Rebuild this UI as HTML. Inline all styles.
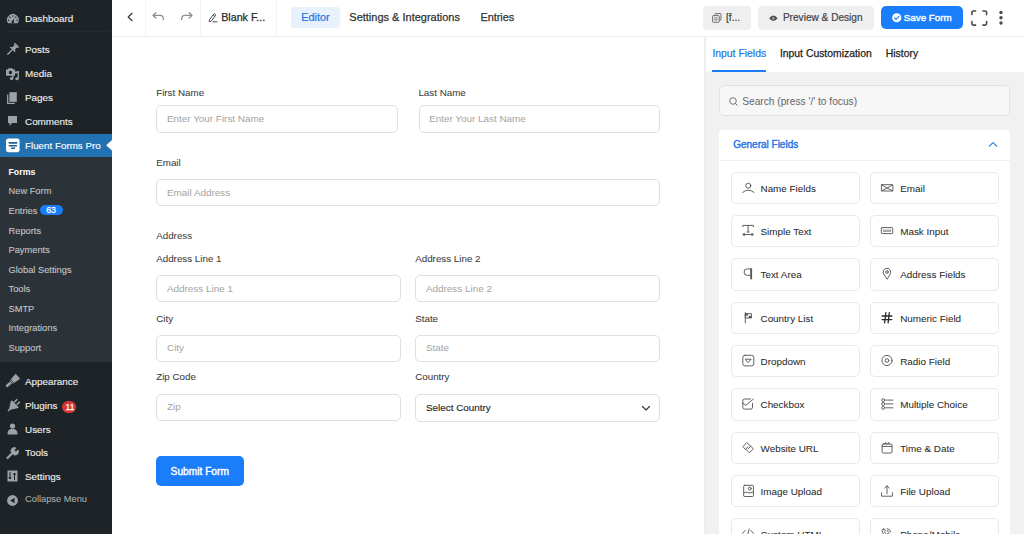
<!DOCTYPE html>
<html><head><meta charset="utf-8"><title>Fluent Forms Editor</title>
<style>
html,body{margin:0;padding:0;width:1024px;height:534px;overflow:hidden;background:#fff;font-family:"Liberation Sans", sans-serif;}
.t{position:absolute;white-space:nowrap;line-height:1;}
.r{position:absolute;}
svg.r{overflow:visible}
</style></head><body>
<div class="r" style="left:0.00px;top:0.00px;width:111.50px;height:534.00px;background:#1d2327"></div>
<div class="r" style="left:0.00px;top:133.80px;width:111.50px;height:23.40px;background:#2271b1"></div>
<div class="r" style="left:0.00px;top:157.20px;width:111.50px;height:205.20px;background:#2c3338"></div>
<svg class="r" style="left:105.9px;top:140.4px" width="6" height="10.4" viewBox="0 0 6 10.4"><path d="M6 0 L0.1 5.2 L6 10.4 Z" fill="#fff"/></svg>
<div class="t" style="left:25.00px;top:14.02px;font-size:9.9px;color:#f0f0f1;font-weight:400;-webkit-text-stroke:0.12px #f0f0f1;">Dashboard</div>
<div class="t" style="left:25.00px;top:45.42px;font-size:9.9px;color:#f0f0f1;font-weight:400;-webkit-text-stroke:0.12px #f0f0f1;">Posts</div>
<div class="t" style="left:25.00px;top:69.42px;font-size:9.9px;color:#f0f0f1;font-weight:400;-webkit-text-stroke:0.12px #f0f0f1;">Media</div>
<div class="t" style="left:25.00px;top:93.22px;font-size:9.9px;color:#f0f0f1;font-weight:400;-webkit-text-stroke:0.12px #f0f0f1;">Pages</div>
<div class="t" style="left:25.00px;top:117.22px;font-size:9.9px;color:#f0f0f1;font-weight:400;-webkit-text-stroke:0.12px #f0f0f1;">Comments</div>
<div class="t" style="left:25.00px;top:140.80px;font-size:9.8px;color:#fff;font-weight:400;-webkit-text-stroke:0.12px #fff;">Fluent Forms Pro</div>
<div class="t" style="left:8.50px;top:167.95px;font-size:8.8px;color:#fff;font-weight:700;">Forms</div>
<div class="t" style="left:8.50px;top:187.43px;font-size:9.3px;color:#c3c4c7;font-weight:400;-webkit-text-stroke:0.1px #c3c4c7;">New Form</div>
<div class="t" style="left:8.50px;top:206.93px;font-size:9.3px;color:#c3c4c7;font-weight:400;-webkit-text-stroke:0.1px #c3c4c7;">Entries</div>
<div class="t" style="left:8.50px;top:226.73px;font-size:9.3px;color:#c3c4c7;font-weight:400;-webkit-text-stroke:0.1px #c3c4c7;">Reports</div>
<div class="t" style="left:8.50px;top:246.23px;font-size:9.3px;color:#c3c4c7;font-weight:400;-webkit-text-stroke:0.1px #c3c4c7;">Payments</div>
<div class="t" style="left:8.50px;top:265.53px;font-size:9.3px;color:#c3c4c7;font-weight:400;-webkit-text-stroke:0.1px #c3c4c7;">Global Settings</div>
<div class="t" style="left:8.50px;top:285.13px;font-size:9.3px;color:#c3c4c7;font-weight:400;-webkit-text-stroke:0.1px #c3c4c7;">Tools</div>
<div class="t" style="left:8.50px;top:304.63px;font-size:9.3px;color:#c3c4c7;font-weight:400;-webkit-text-stroke:0.1px #c3c4c7;">SMTP</div>
<div class="t" style="left:8.50px;top:324.23px;font-size:9.3px;color:#c3c4c7;font-weight:400;-webkit-text-stroke:0.1px #c3c4c7;">Integrations</div>
<div class="t" style="left:8.50px;top:343.83px;font-size:9.3px;color:#c3c4c7;font-weight:400;-webkit-text-stroke:0.1px #c3c4c7;">Support</div>
<div class="r" style="left:39.90px;top:205.10px;width:22.90px;height:10.40px;background:#1a7efb;border-radius:6px"></div>
<div class="t" style="left:46.20px;top:206.35px;font-size:8.8px;color:#fff;font-weight:400;-webkit-text-stroke:0.25px #fff;">63</div>
<div class="t" style="left:25.00px;top:376.72px;font-size:9.9px;color:#f0f0f1;font-weight:400;-webkit-text-stroke:0.12px #f0f0f1;">Appearance</div>
<div class="t" style="left:25.00px;top:400.62px;font-size:9.9px;color:#f0f0f1;font-weight:400;-webkit-text-stroke:0.12px #f0f0f1;">Plugins</div>
<div class="t" style="left:25.00px;top:424.82px;font-size:9.9px;color:#f0f0f1;font-weight:400;-webkit-text-stroke:0.12px #f0f0f1;">Users</div>
<div class="t" style="left:25.00px;top:448.42px;font-size:9.9px;color:#f0f0f1;font-weight:400;-webkit-text-stroke:0.12px #f0f0f1;">Tools</div>
<div class="t" style="left:25.00px;top:472.02px;font-size:9.9px;color:#f0f0f1;font-weight:400;-webkit-text-stroke:0.12px #f0f0f1;">Settings</div>
<div class="r" style="left:62.00px;top:400.80px;width:14.20px;height:11.80px;background:#d63638;border-radius:7px"></div>
<div class="t" style="left:65.60px;top:402.79px;font-size:8.4px;color:#fff;font-weight:400;-webkit-text-stroke:0.25px #fff;">11</div>
<div class="t" style="left:25.00px;top:495.13px;font-size:9.3px;color:#a7aaad;font-weight:400;-webkit-text-stroke:0.1px #a7aaad;">Collapse Menu</div>
<div class="r" style="left:4.00px;top:30.50px;width:107.00px;height:1.00px;background:#23292e"></div>
<svg class="r" style="left:6.7px;top:13.8px" width="12" height="10" viewBox="0 0 12 10"><path d="M1.05 9.2 A5.85 5.85 0 1 1 10.65 9.2 Z" fill="#9ca2a7"/><circle cx="5.85" cy="1.9" r="0.75" fill="#1d2327"/><circle cx="2.9" cy="3.2" r="0.75" fill="#1d2327"/><circle cx="8.8" cy="3.2" r="0.75" fill="#1d2327"/><circle cx="1.7" cy="6.2" r="0.75" fill="#1d2327"/><circle cx="10" cy="6.2" r="0.75" fill="#1d2327"/><path d="M4.9 8.2 L7.2 3.9 L6.9 8.2 Z" fill="#1d2327"/><circle cx="5.8" cy="7.9" r="1.2" fill="#1d2327"/></svg>
<svg class="r" style="left:6.3px;top:43.8px" width="12" height="12" viewBox="0 0 12 12"><g transform="rotate(45 6 6)"><rect x="3" y="-1.2" width="6" height="1.6" rx="0.4" fill="#9ca2a7"/><rect x="4.2" y="0.2" width="3.6" height="3.8" fill="#9ca2a7"/><path d="M1.8 5.6 L4 3.6 H8 L10.2 5.6 Z" fill="#9ca2a7"/><rect x="5.3" y="5.4" width="1.4" height="7.2" rx="0.7" fill="#9ca2a7"/></g></svg>
<svg class="r" style="left:5.8px;top:68px" width="14" height="13" viewBox="0 0 14 13"><path d="M0 1.6 H1.8 L2.6 0.2 H6.4 L7.2 1.6 H9 V7.7 H0 Z" fill="#9ca2a7"/><circle cx="4.5" cy="4.5" r="1.7" fill="#1d2327"/><path d="M6.9 4 L12.3 3 V5 L6.9 6 Z" fill="#9ca2a7"/><path d="M6.9 4 V10.2 M12.3 3 V10.6" stroke="#9ca2a7" stroke-width="1.3"/><ellipse cx="5.6" cy="10.4" rx="1.7" ry="1.5" fill="#9ca2a7"/><ellipse cx="11" cy="10.8" rx="1.7" ry="1.5" fill="#9ca2a7"/></svg>
<svg class="r" style="left:7.4px;top:91.8px" width="11" height="12" viewBox="0 0 11 12"><rect x="2.4" y="0.2" width="7.4" height="9.6" fill="#9ca2a7"/><path d="M0.7 2.5 V11.4 H7.8" fill="none" stroke="#9ca2a7" stroke-width="1.3"/></svg>
<svg class="r" style="left:7px;top:115px" width="11" height="12" viewBox="0 0 11 12"><path d="M1 1 H10 V8 H5 L2.5 11 V8 H1 Z" fill="#9ca2a7"/></svg>
<svg class="r" style="left:5.5px;top:138px" width="13.6" height="14" viewBox="0 0 13.6 14"><rect x="0" y="0.4" width="13.6" height="13.8" rx="2.6" fill="#fff"/><path d="M2.7 4 H11.3 L11.1 5.7 H2.7 Z" fill="#235f96"/><path d="M2.7 7 H11.1 L10.8 8.6 H2.7 Z" fill="#235f96"/><path d="M5.3 9.6 H9.3 L8.8 11 H4.8 Z" fill="#235f96"/></svg>
<svg class="r" style="left:5.3px;top:375.2px" width="14" height="13" viewBox="0 0 14 13"><polygon points="2.20,12.61 6.82,8.47 5.02,6.46 0.40,10.59" fill="#9ca2a7"/><polygon points="7.82,8.84 8.57,8.17 5.50,4.75 4.75,5.41" fill="#9ca2a7"/><polygon points="9.01,7.91 15.10,3.66 10.70,-1.26 5.80,4.34" fill="#9ca2a7"/></svg>
<svg class="r" style="left:6.5px;top:400px" width="13" height="12" viewBox="0 0 13 12"><g transform="rotate(45 6 6)"><rect x="3.4" y="-1.8" width="1.6" height="4.4" rx="0.5" fill="#9ca2a7"/><rect x="7" y="-1.8" width="1.6" height="4.4" rx="0.5" fill="#9ca2a7"/><path d="M1.2 2.8 H10.8 V4.5 L6.8 10.5 V13 H5.2 V10.5 L1.2 4.5 Z" fill="#9ca2a7"/></g></svg>
<svg class="r" style="left:7px;top:423px" width="11" height="12" viewBox="0 0 11 12"><circle cx="5.5" cy="3" r="2.6" fill="#9ca2a7"/><path d="M0.5 11.5 C0.5 7 2.5 6 5.5 6 C8.5 6 10.5 7 10.5 11.5 Z" fill="#9ca2a7"/></svg>
<svg class="r" style="left:6px;top:447px" width="13" height="12" viewBox="0 0 13 12"><path d="M1.5 11 L7 5.5" stroke="#9ca2a7" stroke-width="2.2" stroke-linecap="round"/><path d="M6 6.5 A3.5 3.5 0 0 1 10.5 1 L8.5 3 L10 4.5 L12 2.5 A3.5 3.5 0 0 1 6.5 7 Z" fill="#9ca2a7"/></svg>
<svg class="r" style="left:7px;top:470px" width="11" height="12" viewBox="0 0 11 12"><rect x="0.5" y="0.5" width="10" height="11" fill="#9ca2a7"/><path d="M3 2 V9 M1.8 7.5 L3 9 L4.2 7.5 M7.5 10 V3 M6.3 4.5 L7.5 3 L8.7 4.5" stroke="#1d2327" stroke-width="1"/></svg>
<svg class="r" style="left:7px;top:495px" width="11" height="11" viewBox="0 0 11 11"><circle cx="5.5" cy="5.5" r="5.4" fill="#9ca2a7"/><path d="M7.5 2.8 L7.5 8.2 L3.2 5.5 Z" fill="#1d2327"/></svg>
<div class="r" style="left:111.50px;top:0.00px;width:912.50px;height:36.00px;background:#fff"></div>
<div class="r" style="left:111.50px;top:36.00px;width:912.50px;height:1.00px;background:#f0f0f0"></div>
<div class="r" style="left:145.00px;top:0.00px;width:1.00px;height:36.00px;background:#f4f4f4"></div>
<div class="r" style="left:200.00px;top:0.00px;width:1.00px;height:36.00px;background:#f4f4f4"></div>
<div class="r" style="left:276.00px;top:0.00px;width:1.00px;height:36.00px;background:#f4f4f4"></div>
<svg class="r" style="left:126px;top:12px" width="8" height="11" viewBox="0 0 8 11"><path d="M6 1.3 L2.2 5 L6 8.7" fill="none" stroke="#3c3c3c" stroke-width="1.25" stroke-linecap="round" stroke-linejoin="round"/></svg>
<svg class="r" style="left:152px;top:12px" width="13" height="9" viewBox="0 0 13 9"><path d="M3.8 0.8 L1 3.4 L3.8 6 M1.2 3.4 H8.3 A3 3 0 0 1 11.3 6.4 V7.5" fill="none" stroke="#8f8f8f" stroke-width="1.3" stroke-linecap="round" stroke-linejoin="round"/></svg>
<svg class="r" style="left:181px;top:12px" width="13" height="9" viewBox="0 0 13 9"><path d="M8.2 0.8 L11 3.4 L8.2 6 M10.8 3.4 H3.7 A3 3 0 0 0 0.7 6.4 V7.5" fill="none" stroke="#8f8f8f" stroke-width="1.3" stroke-linecap="round" stroke-linejoin="round"/></svg>
<svg class="r" style="left:208px;top:12.5px" width="10" height="10" viewBox="0 0 10 10"><path d="M1.2 8.7 L1.5 6.6 L5.8 1 Q6.3 0.4 6.9 0.9 L7.5 1.4 Q8 1.9 7.5 2.5 L3.2 8.1 Z M5.1 1.9 L6.9 3.3" fill="none" stroke="#444" stroke-width="0.95" stroke-linejoin="round"/><path d="M5 8.8 H9" stroke="#444" stroke-width="0.95" stroke-linecap="round"/></svg>
<div class="t" style="left:221.20px;top:12.34px;font-size:10.7px;color:#2a2a2a;font-weight:400;-webkit-text-stroke:0.25px #2a2a2a;">Blank F...</div>
<div class="r" style="left:291.00px;top:6.80px;width:48.80px;height:21.20px;background:#e8f2fd;border-radius:3.5px"></div>
<div class="t" style="left:301.20px;top:11.97px;font-size:10.9px;color:#1f74e6;font-weight:400;-webkit-text-stroke:0.2px #1f74e6;">Editor</div>
<div class="t" style="left:349.30px;top:12.09px;font-size:11.0px;color:#333;font-weight:400;-webkit-text-stroke:0.25px #333;">Settings &amp; Integrations</div>
<div class="t" style="left:480.40px;top:12.17px;font-size:10.9px;color:#333;font-weight:400;-webkit-text-stroke:0.25px #333;">Entries</div>
<div class="r" style="left:702.70px;top:6.00px;width:48.10px;height:23.80px;background:#efefef;border-radius:4px"></div>
<svg class="r" style="left:712px;top:12.5px" width="10" height="10" viewBox="0 0 10 10"><path d="M3 2.3 V1.2 Q3 0.6 3.6 0.6 H8.4 Q9 0.6 9 1.2 V6.6 Q9 7.2 8.4 7.2 H7.4" fill="none" stroke="#666" stroke-width="0.95"/><rect x="0.6" y="2.6" width="6.6" height="6.7" rx="0.7" fill="#efefef" stroke="#666" stroke-width="0.95"/><path d="M2.2 5 H5.6 M2.2 6.9 H5.6" stroke="#666" stroke-width="0.9"/></svg>
<div class="t" style="left:726.00px;top:12.97px;font-size:10.2px;color:#444;font-weight:400;-webkit-text-stroke:0.2px #444;">[f...</div>
<div class="r" style="left:758.00px;top:6.00px;width:116.00px;height:23.80px;background:#efefef;border-radius:4px"></div>
<svg class="r" style="left:769.4px;top:14.6px" width="9" height="7" viewBox="0 0 9 7"><path d="M0.2 3.15 Q4.4 -2.3 8.6 3.15 Q4.4 8.6 0.2 3.15 Z" fill="#474747"/><circle cx="4.4" cy="3.15" r="1.5" fill="#9a9a9a"/></svg>
<div class="t" style="left:782.90px;top:13.05px;font-size:10.1px;color:#444;font-weight:400;-webkit-text-stroke:0.2px #444;">Preview &amp; Design</div>
<div class="r" style="left:881.00px;top:6.00px;width:81.50px;height:23.20px;background:#1a7efb;border-radius:5px"></div>
<svg class="r" style="left:891.5px;top:13px" width="9.5" height="9.5" viewBox="0 0 9.5 9.5"><circle cx="4.75" cy="4.75" r="4.6" fill="#fff"/><path d="M2.6 4.8 L4.1 6.3 L7 3.3" fill="none" stroke="#1a7efb" stroke-width="1.2" stroke-linecap="round" stroke-linejoin="round"/></svg>
<div class="t" style="left:903.80px;top:12.90px;font-size:9.8px;color:#fff;font-weight:400;-webkit-text-stroke:0.4px #fff;">Save Form</div>
<svg class="r" style="left:971px;top:10px" width="17" height="16" viewBox="0 0 17 16"><path d="M0.9 4.6 V2.6 Q0.9 0.9 2.6 0.9 H4.6 M11.9 0.9 H13.9 Q15.6 0.9 15.6 2.6 V4.6 M15.6 11.4 V13.4 Q15.6 15.1 13.9 15.1 H11.9 M4.6 15.1 H2.6 Q0.9 15.1 0.9 13.4 V11.4" fill="none" stroke="#4a4a4a" stroke-width="1.55" stroke-linecap="round"/></svg>
<svg class="r" style="left:998px;top:10px" width="6" height="16" viewBox="0 0 6 16"><circle cx="3" cy="2.5" r="1.7" fill="#4a4a4a"/><circle cx="3" cy="7.8" r="1.7" fill="#4a4a4a"/><circle cx="3" cy="13" r="1.7" fill="#4a4a4a"/></svg>
<div class="r" style="left:704.00px;top:37.00px;width:320.00px;height:497.00px;background:#f1f1f1"></div>
<div class="r" style="left:704.00px;top:37.00px;width:2.00px;height:497.00px;background:#eeeeee"></div>
<div class="r" style="left:706.00px;top:37.00px;width:318.00px;height:35.00px;background:#fff"></div>
<div class="r" style="left:712.00px;top:70.00px;width:53.60px;height:2.00px;background:#1a7efb"></div>
<div class="t" style="left:712.40px;top:49.10px;font-size:10.4px;color:#1f74e6;font-weight:400;-webkit-text-stroke:0.2px #1f74e6;">Input Fields</div>
<div class="t" style="left:779.90px;top:49.10px;font-size:10.4px;color:#222;font-weight:400;-webkit-text-stroke:0.25px #222;">Input Customization</div>
<div class="t" style="left:885.80px;top:49.10px;font-size:10.4px;color:#222;font-weight:400;-webkit-text-stroke:0.25px #222;">History</div>
<div class="r" style="left:719.40px;top:85.40px;width:290.40px;height:30.40px;background:#f7f7f7;border:1px solid #e2e2e2;border-radius:5px;box-sizing:border-box"></div>
<svg class="r" style="left:728.9px;top:97.0px" width="9" height="9" viewBox="0 0 9 9"><circle cx="4" cy="4" r="3.3" fill="none" stroke="#777" stroke-width="1"/><path d="M6.4 6.4 L8.3 8.3" stroke="#777" stroke-width="1" stroke-linecap="round"/></svg>
<div class="t" style="left:742.20px;top:97.17px;font-size:10.2px;color:#666;font-weight:400;">Search (press '/' to focus)</div>
<div class="r" style="left:719.00px;top:130.20px;width:290.50px;height:429.80px;background:#fff;border-radius:4px"></div>
<div class="t" style="left:733.20px;top:140.23px;font-size:10.0px;color:#1f74e6;font-weight:400;-webkit-text-stroke:0.4px #1f74e6;">General Fields</div>
<svg class="r" style="left:988px;top:141px" width="10" height="7" viewBox="0 0 10 7"><path d="M1.3 5.2 L5 1.7 L8.7 5.2" fill="none" stroke="#1f74e6" stroke-width="1.05" stroke-linecap="round" stroke-linejoin="round"/></svg>
<div class="r" style="left:719.00px;top:160.20px;width:290.50px;height:1.00px;background:#f0f0f0"></div>
<div class="r" style="left:730.50px;top:171.60px;width:129.20px;height:32.40px;background:#fff;border:1px solid #e8e8e8;border-radius:5px;box-sizing:border-box"></div>
<svg class="r" style="left:740.5px;top:180.6px" width="14" height="14" viewBox="0 0 14 14"><circle cx="7.3" cy="4.7" r="2.5" fill="none" stroke="#595959" stroke-width="0.95" stroke-linecap="round" stroke-linejoin="round"/><path d="M1.7 11.4 Q7.3 6.6 12.9 11.4" fill="none" stroke="#595959" stroke-width="0.95" stroke-linecap="round" stroke-linejoin="round"/></svg>
<div class="t" style="left:760.50px;top:183.82px;font-size:9.9px;color:#2a2a2a;font-weight:400;-webkit-text-stroke:0.05px #2a2a2a;">Name Fields</div>
<div class="r" style="left:870.20px;top:171.60px;width:128.50px;height:32.40px;background:#fff;border:1px solid #e8e8e8;border-radius:5px;box-sizing:border-box"></div>
<svg class="r" style="left:880.2px;top:180.6px" width="14" height="14" viewBox="0 0 14 14"><rect x="1.4" y="3.7" width="11.5" height="6.3" rx="0.6" fill="none" stroke="#595959" stroke-width="0.95" stroke-linecap="round" stroke-linejoin="round" stroke-width="1.1"/><path d="M1.6 3.9 L7.15 7 L12.7 3.9 M1.6 9.8 L7.15 7 L12.7 9.8" fill="none" stroke="#595959" stroke-width="0.95" stroke-linecap="round" stroke-linejoin="round"/></svg>
<div class="t" style="left:900.20px;top:183.82px;font-size:9.9px;color:#2a2a2a;font-weight:400;-webkit-text-stroke:0.05px #2a2a2a;">Email</div>
<div class="r" style="left:730.50px;top:214.93px;width:129.20px;height:32.40px;background:#fff;border:1px solid #e8e8e8;border-radius:5px;box-sizing:border-box"></div>
<svg class="r" style="left:740.5px;top:223.93px" width="14" height="14" viewBox="0 0 14 14"><path d="M1.8 2.8 V1.4 H12.4 V2.8 M7.1 1.4 V8 M6.1 8 H8.1 M2.4 10.5 H11.8" fill="none" stroke="#595959" stroke-width="0.95" stroke-linecap="round" stroke-linejoin="round"/><path d="M1.6 10.5 L3.4 9.2 V11.8 Z M12.6 10.5 L10.8 9.2 V11.8 Z" fill="#595959" stroke="#595959" stroke-width="0.6" stroke-linejoin="round"/></svg>
<div class="t" style="left:760.50px;top:227.15px;font-size:9.9px;color:#2a2a2a;font-weight:400;-webkit-text-stroke:0.05px #2a2a2a;">Simple Text</div>
<div class="r" style="left:870.20px;top:214.93px;width:128.50px;height:32.40px;background:#fff;border:1px solid #e8e8e8;border-radius:5px;box-sizing:border-box"></div>
<svg class="r" style="left:880.2px;top:223.93px" width="14" height="14" viewBox="0 0 14 14"><rect x="1.3" y="3.6" width="11.4" height="6" rx="0.8" fill="none" stroke="#595959" stroke-width="0.95" stroke-linecap="round" stroke-linejoin="round" stroke-width="1.1"/><path d="M3 5.3 H11 V7.9 H3 Z" fill="#9a9a9a"/><path d="M4.2 5.3 L4.8 6.4 L5.4 5.3 M6.4 5.3 L7 6.4 L7.6 5.3 M8.6 5.3 L9.2 6.4 L9.8 5.3" fill="#fff" stroke="#fff" stroke-width="0.6"/></svg>
<div class="t" style="left:900.20px;top:227.15px;font-size:9.9px;color:#2a2a2a;font-weight:400;-webkit-text-stroke:0.05px #2a2a2a;">Mask Input</div>
<div class="r" style="left:730.50px;top:258.26px;width:129.20px;height:32.40px;background:#fff;border:1px solid #e8e8e8;border-radius:5px;box-sizing:border-box"></div>
<svg class="r" style="left:740.5px;top:267.26px" width="14" height="14" viewBox="0 0 14 14"><path d="M10 1.9 H6.3 A3.2 3.2 0 0 0 6.3 8.3 H9.6" fill="none" stroke="#595959" stroke-width="0.95" stroke-linecap="round" stroke-linejoin="round"/><rect x="9.2" y="1.4" width="1.9" height="10.9" fill="#595959"/></svg>
<div class="t" style="left:760.50px;top:270.48px;font-size:9.9px;color:#2a2a2a;font-weight:400;-webkit-text-stroke:0.05px #2a2a2a;">Text Area</div>
<div class="r" style="left:870.20px;top:258.26px;width:128.50px;height:32.40px;background:#fff;border:1px solid #e8e8e8;border-radius:5px;box-sizing:border-box"></div>
<svg class="r" style="left:880.2px;top:267.26px" width="14" height="14" viewBox="0 0 14 14"><path d="M7 11.9 L3.7 7 A3.8 3.8 0 1 1 10.3 7 Z" fill="none" stroke="#595959" stroke-width="0.95" stroke-linecap="round" stroke-linejoin="round" stroke-width="1.1"/><circle cx="7" cy="5" r="1.3" fill="none" stroke="#595959" stroke-width="0.95" stroke-linecap="round" stroke-linejoin="round"/></svg>
<div class="t" style="left:900.20px;top:270.48px;font-size:9.9px;color:#2a2a2a;font-weight:400;-webkit-text-stroke:0.05px #2a2a2a;">Address Fields</div>
<div class="r" style="left:730.50px;top:301.59px;width:129.20px;height:32.40px;background:#fff;border:1px solid #e8e8e8;border-radius:5px;box-sizing:border-box"></div>
<svg class="r" style="left:740.5px;top:310.59px" width="14" height="14" viewBox="0 0 14 14"><path d="M4.3 1.6 V11.9" fill="none" stroke="#595959" stroke-width="0.95" stroke-linecap="round" stroke-linejoin="round" stroke-width="1.2"/><rect x="4.6" y="2.6" width="5.8" height="4.4" fill="none" stroke="#595959" stroke-width="0.95" stroke-linecap="round" stroke-linejoin="round"/><rect x="4.6" y="2.6" width="2.4" height="2.2" fill="#595959"/><rect x="7.7" y="4.8" width="2.7" height="2.2" fill="#595959"/></svg>
<div class="t" style="left:760.50px;top:313.81px;font-size:9.9px;color:#2a2a2a;font-weight:400;-webkit-text-stroke:0.05px #2a2a2a;">Country List</div>
<div class="r" style="left:870.20px;top:301.59px;width:128.50px;height:32.40px;background:#fff;border:1px solid #e8e8e8;border-radius:5px;box-sizing:border-box"></div>
<svg class="r" style="left:880.2px;top:310.59px" width="14" height="14" viewBox="0 0 14 14"><path d="M2.1 5 H11.8 M2.1 8.6 H11.8 M5.9 1.6 L4.6 11.9 M9.3 1.6 L8.1 11.9" fill="none" stroke="#2a2a2a" stroke-width="1.3" stroke-linecap="round"/></svg>
<div class="t" style="left:900.20px;top:313.81px;font-size:9.9px;color:#2a2a2a;font-weight:400;-webkit-text-stroke:0.05px #2a2a2a;">Numeric Field</div>
<div class="r" style="left:730.50px;top:344.92px;width:129.20px;height:32.40px;background:#fff;border:1px solid #e8e8e8;border-radius:5px;box-sizing:border-box"></div>
<svg class="r" style="left:740.5px;top:353.92px" width="14" height="14" viewBox="0 0 14 14"><rect x="1.8" y="1.3" width="11" height="10.6" rx="2.2" fill="none" stroke="#595959" stroke-width="0.95" stroke-linecap="round" stroke-linejoin="round" stroke-width="1.1"/><path d="M4.6 5.2 H10.2 L7.4 8.4 Z" fill="none" stroke="#595959" stroke-width="0.95" stroke-linecap="round" stroke-linejoin="round" stroke-width="1.1"/></svg>
<div class="t" style="left:760.50px;top:357.14px;font-size:9.9px;color:#2a2a2a;font-weight:400;-webkit-text-stroke:0.05px #2a2a2a;">Dropdown</div>
<div class="r" style="left:870.20px;top:344.92px;width:128.50px;height:32.40px;background:#fff;border:1px solid #e8e8e8;border-radius:5px;box-sizing:border-box"></div>
<svg class="r" style="left:880.2px;top:353.92px" width="14" height="14" viewBox="0 0 14 14"><circle cx="7" cy="6.5" r="5.1" fill="none" stroke="#595959" stroke-width="0.95" stroke-linecap="round" stroke-linejoin="round" stroke-width="1.1"/><circle cx="7" cy="6.5" r="1.8" fill="none" stroke="#595959" stroke-width="0.95" stroke-linecap="round" stroke-linejoin="round"/></svg>
<div class="t" style="left:900.20px;top:357.14px;font-size:9.9px;color:#2a2a2a;font-weight:400;-webkit-text-stroke:0.05px #2a2a2a;">Radio Field</div>
<div class="r" style="left:730.50px;top:388.25px;width:129.20px;height:32.40px;background:#fff;border:1px solid #e8e8e8;border-radius:5px;box-sizing:border-box"></div>
<svg class="r" style="left:740.5px;top:397.25px" width="14" height="14" viewBox="0 0 14 14"><path d="M9.5 2 H3.6 A1.8 1.8 0 0 0 1.8 3.8 V10.3 A1.8 1.8 0 0 0 3.6 12.1 H9.7 A1.8 1.8 0 0 0 11.5 10.3 V6.3" fill="none" stroke="#595959" stroke-width="0.95" stroke-linecap="round" stroke-linejoin="round"/><path d="M1.8 6 L4.9 8.3 L12.4 2" fill="none" stroke="#595959" stroke-width="0.95" stroke-linecap="round" stroke-linejoin="round"/></svg>
<div class="t" style="left:760.50px;top:400.47px;font-size:9.9px;color:#2a2a2a;font-weight:400;-webkit-text-stroke:0.05px #2a2a2a;">Checkbox</div>
<div class="r" style="left:870.20px;top:388.25px;width:128.50px;height:32.40px;background:#fff;border:1px solid #e8e8e8;border-radius:5px;box-sizing:border-box"></div>
<svg class="r" style="left:880.2px;top:397.25px" width="14" height="14" viewBox="0 0 14 14"><circle cx="3.2" cy="3.1" r="1.5" fill="none" stroke="#595959" stroke-width="0.95" stroke-linecap="round" stroke-linejoin="round"/><circle cx="3.2" cy="6.9" r="1.5" fill="none" stroke="#595959" stroke-width="0.95" stroke-linecap="round" stroke-linejoin="round"/><circle cx="3.2" cy="10.8" r="1.5" fill="none" stroke="#595959" stroke-width="0.95" stroke-linecap="round" stroke-linejoin="round"/><path d="M5.9 3.1 H12.9 M5.9 6.9 H12.9 M5.9 10.8 H12.9" fill="none" stroke="#595959" stroke-width="0.95" stroke-linecap="round" stroke-linejoin="round"/></svg>
<div class="t" style="left:900.20px;top:400.47px;font-size:9.9px;color:#2a2a2a;font-weight:400;-webkit-text-stroke:0.05px #2a2a2a;">Multiple Choice</div>
<div class="r" style="left:730.50px;top:431.58px;width:129.20px;height:32.40px;background:#fff;border:1px solid #e8e8e8;border-radius:5px;box-sizing:border-box"></div>
<svg class="r" style="left:740.5px;top:440.58px" width="14" height="14" viewBox="0 0 14 14"><path d="M4.6 8.6 L1.9 5.6 L5.9 1.6 L9.6 5.3 L7.2 7.7 M9.4 4.8 L12.3 7.8 L8.4 11.8 L4.7 8.1 L7.1 5.7" fill="none" stroke="#595959" stroke-width="0.95" stroke-linecap="round" stroke-linejoin="round" stroke-width="1.1"/></svg>
<div class="t" style="left:760.50px;top:443.80px;font-size:9.9px;color:#2a2a2a;font-weight:400;-webkit-text-stroke:0.05px #2a2a2a;">Website URL</div>
<div class="r" style="left:870.20px;top:431.58px;width:128.50px;height:32.40px;background:#fff;border:1px solid #e8e8e8;border-radius:5px;box-sizing:border-box"></div>
<svg class="r" style="left:880.2px;top:440.58px" width="14" height="14" viewBox="0 0 14 14"><rect x="2.1" y="3" width="9.9" height="9" rx="1.2" fill="none" stroke="#595959" stroke-width="0.95" stroke-linecap="round" stroke-linejoin="round" stroke-width="1.1"/><path d="M2.1 5.4 H12" fill="none" stroke="#595959" stroke-width="0.95" stroke-linecap="round" stroke-linejoin="round" stroke-width="1.4"/><path d="M4.8 3 L5.6 1.4 L6.6 3 M7.8 3 L8.6 1.4 L9.5 3" fill="none" stroke="#595959" stroke-width="0.95" stroke-linecap="round" stroke-linejoin="round"/></svg>
<div class="t" style="left:900.20px;top:443.80px;font-size:9.9px;color:#2a2a2a;font-weight:400;-webkit-text-stroke:0.05px #2a2a2a;">Time &amp; Date</div>
<div class="r" style="left:730.50px;top:474.91px;width:129.20px;height:32.40px;background:#fff;border:1px solid #e8e8e8;border-radius:5px;box-sizing:border-box"></div>
<svg class="r" style="left:740.5px;top:483.91px" width="14" height="14" viewBox="0 0 14 14"><rect x="2.7" y="1.3" width="9.7" height="11.2" rx="0.8" fill="none" stroke="#595959" stroke-width="0.95" stroke-linecap="round" stroke-linejoin="round" stroke-width="1.1"/><circle cx="8.8" cy="4.6" r="1.5" fill="none" stroke="#595959" stroke-width="0.95" stroke-linecap="round" stroke-linejoin="round"/><path d="M2.9 9 Q4.6 7.2 6.6 8.5 Q8.6 9.8 12.2 8" fill="none" stroke="#595959" stroke-width="0.95" stroke-linecap="round" stroke-linejoin="round"/></svg>
<div class="t" style="left:760.50px;top:487.13px;font-size:9.9px;color:#2a2a2a;font-weight:400;-webkit-text-stroke:0.05px #2a2a2a;">Image Upload</div>
<div class="r" style="left:870.20px;top:474.91px;width:128.50px;height:32.40px;background:#fff;border:1px solid #e8e8e8;border-radius:5px;box-sizing:border-box"></div>
<svg class="r" style="left:880.2px;top:483.91px" width="14" height="14" viewBox="0 0 14 14"><path d="M7 9.6 V1.9 M4.8 4.1 L7 1.7 L9.2 4.1" fill="none" stroke="#595959" stroke-width="0.95" stroke-linecap="round" stroke-linejoin="round" stroke-width="1.1"/><path d="M1.6 8.7 V12.2 H12.4 V8.7" fill="none" stroke="#595959" stroke-width="0.95" stroke-linecap="round" stroke-linejoin="round" stroke-width="1.1"/></svg>
<div class="t" style="left:900.20px;top:487.13px;font-size:9.9px;color:#2a2a2a;font-weight:400;-webkit-text-stroke:0.05px #2a2a2a;">File Upload</div>
<div class="r" style="left:730.50px;top:518.24px;width:129.20px;height:32.40px;background:#fff;border:1px solid #e8e8e8;border-radius:5px;box-sizing:border-box"></div>
<svg class="r" style="left:740.5px;top:527.24px" width="14" height="14" viewBox="0 0 14 14"><path d="M4 3.5 L1.5 6.5 L4 9.5 M10 3.5 L12.5 6.5 L10 9.5 M8.2 2 L5.8 11" fill="none" stroke="#595959" stroke-width="0.95" stroke-linecap="round" stroke-linejoin="round"/></svg>
<div class="t" style="left:760.50px;top:530.46px;font-size:9.9px;color:#2a2a2a;font-weight:400;-webkit-text-stroke:0.05px #2a2a2a;">Custom HTML</div>
<div class="r" style="left:870.20px;top:518.24px;width:128.50px;height:32.40px;background:#fff;border:1px solid #e8e8e8;border-radius:5px;box-sizing:border-box"></div>
<svg class="r" style="left:880.2px;top:527.24px" width="14" height="14" viewBox="0 0 14 14"><path d="M3.2 2.2 L4.6 2 L5.4 4 L4.5 4.8 Q5.2 6.6 6.8 7.4 L7.6 6.5 L9.6 7.3 L9.4 8.7 Q9 9.8 7.6 9.6 Q2.8 8.6 2.2 3.6 Q2.1 2.5 3.2 2.2 Z" fill="none" stroke="#595959" stroke-width="0.95" stroke-linecap="round" stroke-linejoin="round"/><path d="M7.2 1.6 Q10.2 2 10.6 5 M7 3.6 Q8.4 3.8 8.7 5.2" fill="none" stroke="#595959" stroke-width="0.95" stroke-linecap="round" stroke-linejoin="round"/></svg>
<div class="t" style="left:900.20px;top:530.46px;font-size:9.9px;color:#2a2a2a;font-weight:400;-webkit-text-stroke:0.05px #2a2a2a;">Phone/Mobile</div>
<div class="t" style="left:156.20px;top:88.20px;font-size:9.8px;color:#3a3a3a;font-weight:400;-webkit-text-stroke:0.05px #3a3a3a;">First Name</div>
<div class="r" style="left:156.40px;top:105.30px;width:241.20px;height:27.30px;background:#fff;border:1px solid #e0e0e0;border-radius:5px;box-sizing:border-box"></div>
<div class="t" style="left:167.00px;top:114.12px;font-size:9.9px;color:#a3a3a3;font-weight:400;">Enter Your First Name</div>
<div class="t" style="left:418.40px;top:88.20px;font-size:9.8px;color:#3a3a3a;font-weight:400;-webkit-text-stroke:0.05px #3a3a3a;">Last Name</div>
<div class="r" style="left:418.60px;top:105.30px;width:241.20px;height:27.30px;background:#fff;border:1px solid #e0e0e0;border-radius:5px;box-sizing:border-box"></div>
<div class="t" style="left:429.20px;top:114.12px;font-size:9.9px;color:#a3a3a3;font-weight:400;">Enter Your Last Name</div>
<div class="t" style="left:156.20px;top:157.70px;font-size:9.8px;color:#3a3a3a;font-weight:400;-webkit-text-stroke:0.05px #3a3a3a;">Email</div>
<div class="r" style="left:156.40px;top:178.70px;width:503.60px;height:27.10px;background:#fff;border:1px solid #e0e0e0;border-radius:5px;box-sizing:border-box"></div>
<div class="t" style="left:167.00px;top:187.52px;font-size:9.9px;color:#a3a3a3;font-weight:400;">Email Address</div>
<div class="t" style="left:156.20px;top:230.70px;font-size:9.8px;color:#3a3a3a;font-weight:400;">Address</div>
<div class="t" style="left:156.20px;top:254.00px;font-size:9.8px;color:#3a3a3a;font-weight:400;-webkit-text-stroke:0.05px #3a3a3a;">Address Line 1</div>
<div class="r" style="left:156.40px;top:275.00px;width:244.30px;height:27.20px;background:#fff;border:1px solid #e0e0e0;border-radius:5px;box-sizing:border-box"></div>
<div class="t" style="left:167.00px;top:283.82px;font-size:9.9px;color:#a3a3a3;font-weight:400;">Address Line 1</div>
<div class="t" style="left:415.20px;top:254.00px;font-size:9.8px;color:#3a3a3a;font-weight:400;-webkit-text-stroke:0.05px #3a3a3a;">Address Line 2</div>
<div class="r" style="left:415.40px;top:275.00px;width:244.20px;height:27.20px;background:#fff;border:1px solid #e0e0e0;border-radius:5px;box-sizing:border-box"></div>
<div class="t" style="left:426.00px;top:283.82px;font-size:9.9px;color:#a3a3a3;font-weight:400;">Address Line 2</div>
<div class="t" style="left:156.20px;top:313.50px;font-size:9.8px;color:#3a3a3a;font-weight:400;-webkit-text-stroke:0.05px #3a3a3a;">City</div>
<div class="r" style="left:156.40px;top:334.50px;width:244.30px;height:27.40px;background:#fff;border:1px solid #e0e0e0;border-radius:5px;box-sizing:border-box"></div>
<div class="t" style="left:167.00px;top:343.32px;font-size:9.9px;color:#a3a3a3;font-weight:400;">City</div>
<div class="t" style="left:415.20px;top:313.50px;font-size:9.8px;color:#3a3a3a;font-weight:400;-webkit-text-stroke:0.05px #3a3a3a;">State</div>
<div class="r" style="left:415.40px;top:334.50px;width:244.20px;height:27.40px;background:#fff;border:1px solid #e0e0e0;border-radius:5px;box-sizing:border-box"></div>
<div class="t" style="left:426.00px;top:343.32px;font-size:9.9px;color:#a3a3a3;font-weight:400;">State</div>
<div class="t" style="left:156.20px;top:372.30px;font-size:9.8px;color:#3a3a3a;font-weight:400;-webkit-text-stroke:0.05px #3a3a3a;">Zip Code</div>
<div class="r" style="left:156.40px;top:393.60px;width:244.30px;height:27.60px;background:#fff;border:1px solid #e0e0e0;border-radius:5px;box-sizing:border-box"></div>
<div class="t" style="left:167.00px;top:402.42px;font-size:9.9px;color:#a3a3a3;font-weight:400;">Zip</div>
<div class="t" style="left:415.20px;top:372.30px;font-size:9.8px;color:#3a3a3a;font-weight:400;-webkit-text-stroke:0.05px #3a3a3a;">Country</div>
<div class="r" style="left:415.40px;top:394.40px;width:244.20px;height:27.40px;background:#fff;border:1px solid #e0e0e0;border-radius:5px;box-sizing:border-box"></div>
<div class="t" style="left:426.00px;top:403.22px;font-size:9.9px;color:#2a2a2a;font-weight:400;-webkit-text-stroke:0.15px #2a2a2a;">Select Country</div>
<svg class="r" style="left:640.5px;top:405px" width="10" height="7" viewBox="0 0 10 7"><path d="M1.5 1.5 L5 5 L8.5 1.5" fill="none" stroke="#333" stroke-width="1.1" stroke-linecap="round" stroke-linejoin="round"/></svg>
<div class="r" style="left:155.70px;top:456.20px;width:88.50px;height:30.00px;background:#1a7efb;border-radius:5px"></div>
<div class="t" style="left:170.60px;top:466.87px;font-size:10.2px;color:#fff;font-weight:400;-webkit-text-stroke:0.4px #fff;">Submit Form</div>
</body></html>
